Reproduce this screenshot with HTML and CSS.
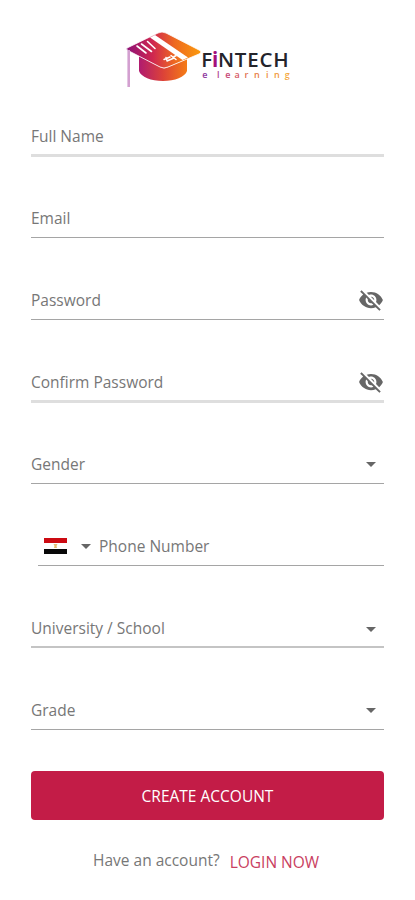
FILE: index.html
```
<!DOCTYPE html>
<html lang="en">
<head>
    <meta charset="UTF-8">
    <meta name="viewport" content="width=device-width, initial-scale=1.0">
    <title>Create Account</title>
    <link rel="stylesheet" href="styles.css">
</head>
<body>
    <!-- Logo -->
    <header class="logo">
        <svg width="170" height="60" viewBox="125 30 170 60">
            <defs>
                <linearGradient id="top" x1="0" y1="0" x2="1" y2="0">
                    <stop offset="0" stop-color="#8d1278"/>
                    <stop offset="0.35" stop-color="#cf2650"/>
                    <stop offset="0.65" stop-color="#ee6a20"/>
                    <stop offset="1" stop-color="#fb9a0c"/>
                </linearGradient>
                <linearGradient id="base" x1="0" y1="0" x2="1" y2="0">
                    <stop offset="0" stop-color="#b01b70"/>
                    <stop offset="0.5" stop-color="#dc4238"/>
                    <stop offset="1" stop-color="#f57c16"/>
                </linearGradient>
            </defs>
            <path d="M139 56v15c2 6 12 10 24 10s22-4 24-10V59l-21 9q-3 1-6-1z" fill="url(#base)"/>
            <path d="M127 48l31-15q4-2 8 0l33 17q4 2 0 4l-31 13q-4 2-8 0l-31-16q-4-2-2-3z" fill="url(#top)" stroke="#fff" stroke-width="0.800"/>
            <path d="M128.700 50v37" stroke="#d3a0d0" stroke-width="2.600"/>
            <path d="M150 37.500l32.500 22.500 5.500-2.500-33-22.500z" fill="#fff"/>
            <path d="M137 46l9 7M141.500 44l10 7.500M147.500 41.500l7.500 7" stroke="#fff" stroke-width="1.600" stroke-linecap="round"/>
            <path d="M164 59.500l6-2.500M167 61l7-3M166 57.500l1 3M171 55.500l5 4M174 56.500l2-.800" stroke="#fff" stroke-width="1.500" stroke-linecap="round" fill="none"/>
            <text class="brand" y="67.300"><tspan x="201.300">F</tspan><tspan class="brand-i" x="212">i</tspan><tspan x="218">NTECH</tspan></text>
            <text class="tagline" y="78" x="202.200 217 225.200 234.500 244.500 254 266 274 284.800"><tspan fill="#8f3aa0">e</tspan><tspan fill="#b04a90">l</tspan><tspan fill="#c84a78">e</tspan><tspan fill="#d65a64">a</tspan><tspan fill="#e07050">r</tspan><tspan fill="#e88048">n</tspan><tspan fill="#ee8c38">i</tspan><tspan fill="#f29a40">n</tspan><tspan fill="#f5a840">g</tspan></text>
        </svg>
    </header>

    <form class="formulario">
        <div class="campo campo-grueso"><span class="etiqueta">Full Name</span></div>
        <div class="campo"><span class="etiqueta">Email</span></div>
        <div class="campo">
            <span class="etiqueta">Password</span>
            <svg class="ojo" viewBox="0 0 24 24"><path d="M12 7c2.760 0 5 2.240 5 5 0 .650-.130 1.260-.360 1.830l2.920 2.920c1.510-1.260 2.700-2.890 3.430-4.750-1.730-4.390-6-7.500-11-7.500-1.400 0-2.740.250-3.980.700l2.160 2.160C10.740 7.130 11.350 7 12 7zM2 4.270l2.280 2.280.460.460C3.080 8.300 1.780 10.020 1 12c1.730 4.390 6 7.500 11 7.500 1.550 0 3.030-.300 4.380-.840l.420.420L19.730 22 21 20.730 3.270 3 2 4.270zM7.530 9.800l1.550 1.550c-.050.210-.080.430-.080.650 0 1.660 1.340 3 3 3 .220 0 .440-.030.650-.080l1.550 1.550c-.670.330-1.410.530-2.200.530-2.760 0-5-2.240-5-5 0-.790.200-1.530.530-2.200zm4.310-.780l3.150 3.150.020-.160c0-1.660-1.340-3-3-3l-.170.010z"/></svg>
        </div>
        <div class="campo campo-grueso">
            <span class="etiqueta">Confirm Password</span>
            <svg class="ojo" viewBox="0 0 24 24"><path d="M12 7c2.760 0 5 2.240 5 5 0 .650-.130 1.260-.360 1.830l2.920 2.920c1.510-1.260 2.700-2.890 3.430-4.750-1.730-4.390-6-7.500-11-7.500-1.400 0-2.740.250-3.980.700l2.160 2.160C10.740 7.130 11.350 7 12 7zM2 4.270l2.280 2.280.460.460C3.080 8.300 1.780 10.020 1 12c1.730 4.390 6 7.500 11 7.500 1.550 0 3.030-.300 4.380-.840l.420.420L19.730 22 21 20.730 3.270 3 2 4.270zM7.530 9.800l1.550 1.550c-.050.210-.080.430-.080.650 0 1.660 1.340 3 3 3 .220 0 .440-.030.650-.080l1.550 1.550c-.670.330-1.410.530-2.200.530-2.760 0-5-2.240-5-5 0-.790.200-1.530.530-2.200zm4.310-.780l3.150 3.150.020-.160c0-1.660-1.340-3-3-3l-.170.010z"/></svg>
        </div>
        <div class="campo"><span class="etiqueta">Gender</span><span class="flecha"></span></div>
        <!-- Telefono -->
        <div class="campo campo-telefono">
            <svg class="bandera" viewBox="0 0 23 16"><path fill="#fff" d="M0 0h23v16H0z"/><path fill="#cc0a12" d="M0 0h23v5H0z"/><path fill="#080808" d="M0 11h23v5H0z"/><path fill="#e5bd72" d="M9.500 6h4l-1 2 .500 2h-3l.500-2z"/></svg>
            <span class="flecha"></span>
            <span class="etiqueta">Phone Number</span>
        </div>
        <div class="campo campo-medio"><span class="etiqueta">University / School</span><span class="flecha"></span></div>
        <div class="campo"><span class="etiqueta">Grade</span><span class="flecha"></span></div>
        <button class="boton" type="button">CREATE ACCOUNT</button>
    </form>

    <p class="pie">Have an account? <a class="enlace">LOGIN NOW</a></p>
</body>
</html>
```
FILE: styles.css
```
html, body {
    margin: 0;
    padding: 0;
    background-color: #fff;
    font-family: "Open Sans", sans-serif;
}

.logo {
    display: flex;
    height: 60px;
    padding: 30px 0 0 125px;
}

.brand {
    font-size: 20.500px;
    font-weight: 600;
    letter-spacing: 0.800px;
    fill: #24242b;
}

.brand-i {
    font-weight: 700;
    fill: #a3107c;
}

.tagline {
    font-size: 9px;
    font-weight: 600;
}

.formulario {
    padding: 0 31px;
}

.campo {
    box-sizing: border-box;
    display: flex;
    align-items: center;
    justify-content: space-between;
    height: 40px;
    margin: 0 0 42px;
    border-bottom: 1px solid #a5a5a5;
}

.formulario .campo:first-child {
    margin-top: 26px;
}

.campo-grueso {
    border-bottom: 3px solid #dedede;
    height: 41px;
    margin-bottom: 41px;
    padding-top: 2px;
}

.campo-medio {
    border-bottom: 2px solid #c4c4c4;
    padding-top: 2px;
}

.etiqueta {
    font-size: 15.500px;
    color: #777;
}

.ojo {
    width: 26px;
    height: 26px;
    fill: #666;
}

.flecha {
    border: 5px solid transparent;
    border-top-color: #666;
    border-bottom: 0;
    margin: 2px 8px 0 0;
}

.campo-telefono {
    justify-content: flex-start;
    margin-left: 7px;
    padding-left: 6px;
}

.bandera {
    width: 23px;
    height: 16px;
    margin-right: 14px;
}

.boton {
    display: block;
    width: 100%;
    height: 49px;
    margin-top: -1px;
    border: none;
    border-radius: 4px;
    background-color: #c31c47;
    color: #fff;
    font-family: inherit;
    font-size: 15.500px;
}

.pie {
    display: flex;
    gap: 10px;
    margin: 29px 0 0 93px;
    font-size: 15.500px;
    color: #777;
}

.enlace {
    padding-top: 2px;
    color: #c9405f;
}
```
